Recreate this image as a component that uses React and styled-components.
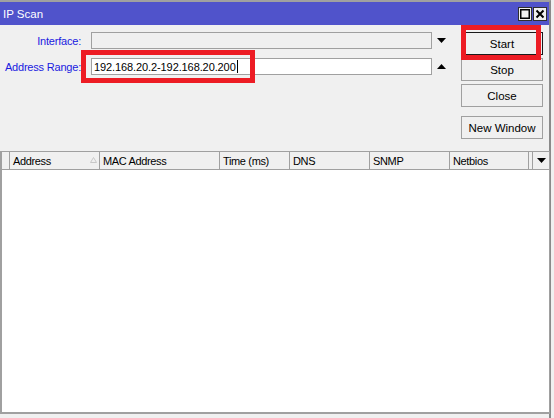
import React from "react";
import styled, { createGlobalStyle } from "styled-components";

const GlobalStyle = createGlobalStyle`
  *, *::before, *::after {
    box-sizing: border-box;
  }
  html, body {
    margin: 0;
    padding: 0;
    background: #f0f0f0;
    overflow: hidden;
  }
  body {
    font-family: "Liberation Sans", Arial, sans-serif;
    font-size: 11px;
    color: #000;
  }
`;

const Frame = styled.div`
  width: 551px;
  height: 418px;
  border-top: 2px solid #a0a0a0;
  border-right: 2px solid #8a8a8a;
  display: flex;
  flex-direction: column;
  background: #f0f0f0;
`;

const TitleBar = styled.div`
  height: 23px;
  flex-shrink: 0;
  background: #5053cb;
  color: #fff;
  display: flex;
  align-items: center;
  padding: 0 2px 0 3px;
  font-size: 11.5px;
`;

const Title = styled.span`
  flex: 1;
`;

const WinButton = styled.div`
  width: 14px;
  height: 14px;
  border: 1px solid #303030;
  background: #f0f0f0;
  display: flex;
  align-items: center;
  justify-content: center;
  margin-left: 1px;
`;

const FormArea = styled.div`
  position: relative;
  height: 126px;
  flex-shrink: 0;
  display: flex;
  padding-top: 7px;
`;

const Fields = styled.div`
  display: grid;
  grid-template-columns: 81px 351px 18px;
  row-gap: 9px;
  align-content: start;
  align-items: center;
  width: 450px;
`;

const Label = styled.label`
  color: #1a1ae0;
  text-align: right;
  letter-spacing: -0.2px;
`;

const Input = styled.div`
  height: 17px;
  margin-left: 10px;
  border: 1px solid #a0a0a0;
  background: ${(p) => (p.disabled ? "#f0f0f0" : "#fff")};
  display: flex;
  align-items: center;
  padding-left: 2px;
  letter-spacing: -0.1px;
`;

const Caret = styled.span`
  display: inline-block;
  width: 1px;
  height: 13px;
  background: #000;
  margin-left: 1px;
`;

const ArrowCell = styled.div`
  display: flex;
  justify-content: center;
  align-items: center;
`;

const Buttons = styled.div`
  display: flex;
  flex-direction: column;
  gap: 3px;
  margin-left: 11px;
`;

const Button = styled.div`
  width: 82px;
  height: 23px;
  border: 1px solid ${(p) => (p.primary ? "#1a1a1a" : "#a0a0a0")};
  background: #f0f0f0;
  display: flex;
  align-items: center;
  justify-content: center;
  font-size: 11.5px;
  margin-top: ${(p) => p.gapTop || 0}px;
`;

const Highlight = styled.div`
  position: absolute;
  left: ${(p) => p.x}px;
  top: ${(p) => p.y}px;
  width: ${(p) => p.w}px;
  height: ${(p) => p.h}px;
  border: 5px solid #ed1c24;
  pointer-events: none;
`;

const Table = styled.div`
  height: 263px;
  flex-shrink: 0;
  display: flex;
  flex-direction: column;
  border-left: 2px solid #a0a0a0;
  border-bottom: 2px solid #a0a0a0;
  border-right: 1px solid #a0a0a0;
  margin-right: -1px;
`;

const Header = styled.div`
  display: flex;
  height: 19px;
  flex-shrink: 0;
  border-top: 1px solid #a0a0a0;
  border-bottom: 1px solid #a0a0a0;
  background: #f0f0f0;
`;

const Col = styled.div`
  width: ${(p) => p.w}px;
  flex-shrink: 0;
  border-right: 1px solid #a0a0a0;
  display: flex;
  align-items: center;
  padding-left: 3px;
  letter-spacing: -0.35px;
  position: relative;
`;

const MenuCol = styled.div`
  flex: 1;
  display: flex;
  align-items: center;
  justify-content: center;
`;

const SortMark = styled.svg`
  position: absolute;
  right: 2px;
  top: 5px;
`;

const Body = styled.div`
  flex: 1;
  background: #fff;
`;

const Down = () => (
  <svg width="9" height="5" viewBox="0 0 9 5">
    <polygon points="0,0 9,0 4.5,5" fill="#000" />
  </svg>
);

const Up = () => (
  <svg width="9" height="5" viewBox="0 0 9 5">
    <polygon points="0,5 9,5 4.5,0" fill="#000" />
  </svg>
);

const columns = [
  { w: 8, label: "" },
  { w: 90, label: "Address", sort: true },
  { w: 120, label: "MAC Address" },
  { w: 70, label: "Time (ms)" },
  { w: 80, label: "DNS" },
  { w: 80, label: "SNMP" },
  { w: 79, label: "Netbios" },
  { w: 4, label: "" },
];

export default function App() {
  return (
    <>
      <GlobalStyle />
      <Frame>
        <TitleBar>
          <Title>IP Scan</Title>
          <WinButton>
            <svg width="10" height="10" viewBox="0 0 10 10">
              <rect x="0.75" y="0.75" width="8.5" height="8.5" fill="none" stroke="#000" strokeWidth="1.5" />
            </svg>
          </WinButton>
          <WinButton>
            <svg width="10" height="10" viewBox="0 0 10 10">
              <path d="M1.5 1.5 L8.5 8.5 M8.5 1.5 L1.5 8.5" stroke="#000" strokeWidth="2" />
            </svg>
          </WinButton>
        </TitleBar>

        <FormArea>
          <Fields>
            <Label>Interface:</Label>
            <Input disabled />
            <ArrowCell>
              <Down />
            </ArrowCell>
            <Label>Address Range:</Label>
            <Input>
              192.168.20.2-192.168.20.200
              <Caret />
            </Input>
            <ArrowCell>
              <Up />
            </ArrowCell>
          </Fields>
          <Buttons>
            <Button primary>Start</Button>
            <Button>Stop</Button>
            <Button>Close</Button>
            <Button gapTop={6}>New Window</Button>
          </Buttons>
          <Highlight x={81} y={25} w={174} h={33} />
          <Highlight x={461} y={0} w={80} h={35} />
        </FormArea>

        <Table>
          <Header>
            {columns.map((c, i) => (
              <Col key={i} w={c.w}>
                {c.label}
                {c.sort && (
                  <SortMark width="7" height="6" viewBox="0 0 7 6">
                    <polygon points="0.5,5.5 6.5,5.5 3.5,0.5" fill="none" stroke="#c8c8c8" />
                  </SortMark>
                )}
              </Col>
            ))}
            <MenuCol>
              <Down />
            </MenuCol>
          </Header>
          <Body />
        </Table>
      </Frame>
    </>
  );
}
